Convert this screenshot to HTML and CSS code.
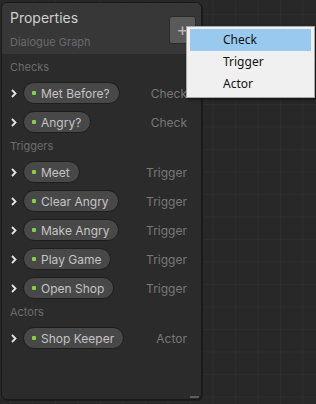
FILE: index.html
```html
<!DOCTYPE html>
<html>
<head>
<meta charset="utf-8">
<link rel="stylesheet" href="styles.css">
</head>
<body>
<div class="canvas">
  <div class="panel">
    <div class="header">
      <div class="titles">
        <div class="title">Properties</div>
        <div class="subtitle">Dialogue Graph</div>
      </div>
      <div class="add-btn">+</div>
    </div>
    <div class="body">
      <div class="section">Checks</div>
      <div class="row"><svg class="chev" width="6" height="9" viewBox="0 0 6 9"><path d="M1 1 L4.5 4.5 L1 8" fill="none" stroke="#e6e6e6" stroke-width="1.8"/></svg><span class="pill"><span class="dot"></span>Met Before?</span><span class="kind">Check</span></div>
      <div class="row"><svg class="chev" width="6" height="9" viewBox="0 0 6 9"><path d="M1 1 L4.5 4.5 L1 8" fill="none" stroke="#e6e6e6" stroke-width="1.8"/></svg><span class="pill"><span class="dot"></span>Angry?</span><span class="kind">Check</span></div>
      <div class="section">Triggers</div>
      <div class="row"><svg class="chev" width="6" height="9" viewBox="0 0 6 9"><path d="M1 1 L4.5 4.5 L1 8" fill="none" stroke="#e6e6e6" stroke-width="1.8"/></svg><span class="pill"><span class="dot"></span>Meet</span><span class="kind">Trigger</span></div>
      <div class="row"><svg class="chev" width="6" height="9" viewBox="0 0 6 9"><path d="M1 1 L4.5 4.5 L1 8" fill="none" stroke="#e6e6e6" stroke-width="1.8"/></svg><span class="pill"><span class="dot"></span>Clear Angry</span><span class="kind">Trigger</span></div>
      <div class="row"><svg class="chev" width="6" height="9" viewBox="0 0 6 9"><path d="M1 1 L4.5 4.5 L1 8" fill="none" stroke="#e6e6e6" stroke-width="1.8"/></svg><span class="pill"><span class="dot"></span>Make Angry</span><span class="kind">Trigger</span></div>
      <div class="row"><svg class="chev" width="6" height="9" viewBox="0 0 6 9"><path d="M1 1 L4.5 4.5 L1 8" fill="none" stroke="#e6e6e6" stroke-width="1.8"/></svg><span class="pill"><span class="dot"></span>Play Game</span><span class="kind">Trigger</span></div>
      <div class="row"><svg class="chev" width="6" height="9" viewBox="0 0 6 9"><path d="M1 1 L4.5 4.5 L1 8" fill="none" stroke="#e6e6e6" stroke-width="1.8"/></svg><span class="pill"><span class="dot"></span>Open Shop</span><span class="kind">Trigger</span></div>
      <div class="section">Actors</div>
      <div class="row"><svg class="chev" width="6" height="9" viewBox="0 0 6 9"><path d="M1 1 L4.5 4.5 L1 8" fill="none" stroke="#e6e6e6" stroke-width="1.8"/></svg><span class="pill"><span class="dot"></span>Shop Keeper</span><span class="kind">Actor</span></div>
    </div>
    <div class="resize"></div>
  </div>
  <div class="menu">
    <div class="item active">Check</div>
    <div class="item">Trigger</div>
    <div class="item">Actor</div>
  </div>
</div>
</body>
</html>
```

FILE: styles.css
```css
* { box-sizing: border-box; }
html, body { margin: 0; padding: 0; }
body {
  width: 316px;
  height: 404px;
  overflow: hidden;
  background-color: #282828;
  background-image:
    linear-gradient(to right, rgba(255,255,255,0.025) 1px, transparent 1px),
    linear-gradient(to bottom, rgba(255,255,255,0.025) 1px, transparent 1px);
  background-size: 22.5px 22.5px;
  background-position: 10px 14px;
  font-family: Inter, "Noto Sans", sans-serif;
}
.canvas {
  position: relative;
  width: 316px;
  height: 404px;
}
.panel {
  position: absolute;
  left: 1px;
  top: 2px;
  width: 201px;
  height: 398px;
  background: #2b2b2b;
  border: 1px solid #191919;
  border-radius: 6px;
  box-shadow: 1px 1px 0 #1c1c1c;
  overflow: hidden;
  display: flex;
  flex-direction: column;
}
.header {
  background: #373737;
  height: 51px;
  flex: none;
  display: flex;
  justify-content: space-between;
  align-items: flex-start;
  padding: 6px 5px 0 8px;
}
.title {
  font-size: 14px;
  color: #cfcfcf;
  line-height: 18px;
  margin-top: 0;
}
.subtitle {
  font-size: 11px;
  color: #6a6a6a;
  line-height: 14px;
  margin-top: 8px;
}
.add-btn {
  width: 27px;
  height: 28px;
  margin-top: 7px;
  background: #5a5a5a;
  border: 1px solid #2a2a2a;
  border-radius: 3px;
  color: #b4b4b4;
  font-size: 18px;
  line-height: 25px;
  text-align: center;
}
.body {
  flex: 1;
  padding: 5px 14px 0 8px;
  display: flex;
  flex-direction: column;
}
.section {
  font-size: 11px;
  color: #6b6b6b;
  line-height: 16px;
  height: 16px;
  margin-bottom: 5px;
}
.row {
  height: 29px;
  display: flex;
  align-items: center;
  padding-bottom: 3px;
}
.chev {
  flex: none;
  margin-left: 1px;
  margin-right: 6px;
}
.pill {
  display: flex;
  align-items: center;
  height: 22px;
  padding: 0 9px 0 8px;
  background: #484848;
  border: 1px solid #1e1e1e;
  border-radius: 11px;
  color: #c4c4c4;
  font-size: 12px;
  white-space: nowrap;
}
.dot {
  width: 4px;
  height: 4px;
  background: #84d13f;
  border-radius: 1px;
  margin-right: 5px;
  flex: none;
}
.kind {
  margin-left: auto;
  font-size: 12px;
  color: #787878;
}
.resize {
  position: absolute;
  right: 2px;
  bottom: 1px;
  width: 9px;
  height: 2px;
  background: #5e5e5e;
}
.menu {
  position: absolute;
  left: 186px;
  top: 26px;
  width: 129px;
  padding: 2px 3px;
  background: #f0f0f0;
  border: 1px solid #a8a8a8;
  box-shadow: 2px 2px 3px rgba(0,0,0,0.45);
  font-family: "Noto Sans", "Open Sans", sans-serif;
}
.item {
  height: 22px;
  line-height: 22px;
  padding-left: 33px;
  font-size: 12px;
  color: #111;
}
.item.active {
  background: #99c9ef;
}
```
